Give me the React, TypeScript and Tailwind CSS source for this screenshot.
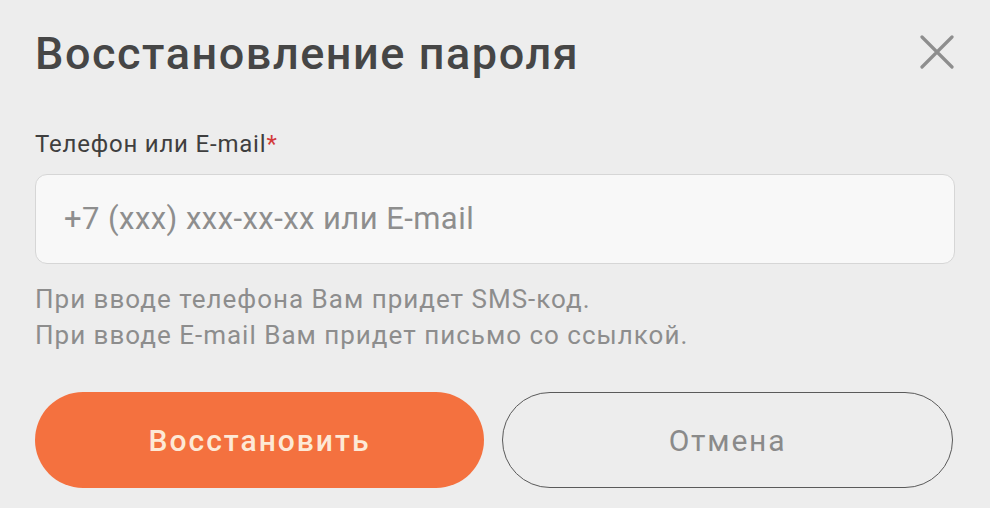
import React from "react";

export default function App() {
  return (
    <div className="w-[990px] h-[508px] bg-[#ededed] overflow-hidden font-['Roboto',sans-serif] px-[35px] pt-[28px]">
      <div className="flex items-start justify-between">
        <h1 className="text-[45px] leading-[52px] font-medium text-[#464646] tracking-[1.55px]">
          Восстановление пароля
        </h1>
        <button className="mt-[4px] mr-[-2px] w-[40px] h-[40px] flex items-center justify-center">
          <svg width="34" height="34" viewBox="0 0 34 34">
            <path d="M2 2 L32 32 M32 2 L2 32" stroke="#8e8e8e" strokeWidth="3.2" strokeLinecap="round" />
          </svg>
        </button>
      </div>
      <div className="mt-[50px] text-[24px] leading-[28px] text-[#3f3f3f] tracking-[0.8px]">
        Телефон или E-mail<span className="text-[#d23a3a]">*</span>
      </div>
      <div className="mt-[16px] h-[90px] rounded-[12px] border border-[#d6d6d6] bg-[#f8f8f8] flex items-center px-[28px]">
        <span className="text-[31px] text-[#8e8e8e] tracking-[0.45px]">+7 (xxx) xxx-xx-xx или E-mail</span>
      </div>
      <div className="mt-[17px] text-[26px] leading-[36px] text-[#8d8d8d] tracking-[1px]">
        <div>При вводе телефона Вам придет SMS-код.</div>
        <div>При вводе E-mail Вам придет письмо со ссылкой.</div>
      </div>
      <div className="mt-[39px] flex gap-[18px]">
        <button className="w-[449px] h-[96px] rounded-full bg-[#f4713f] text-[#fde9d6] text-[30px] font-medium tracking-[2px]">
          Восстановить
        </button>
        <button className="w-[451px] h-[96px] rounded-full border border-[#5a5a5a] text-[#8a8a8a] text-[30px] tracking-[1.8px]">
          Отмена
        </button>
      </div>
    </div>
  );
}
